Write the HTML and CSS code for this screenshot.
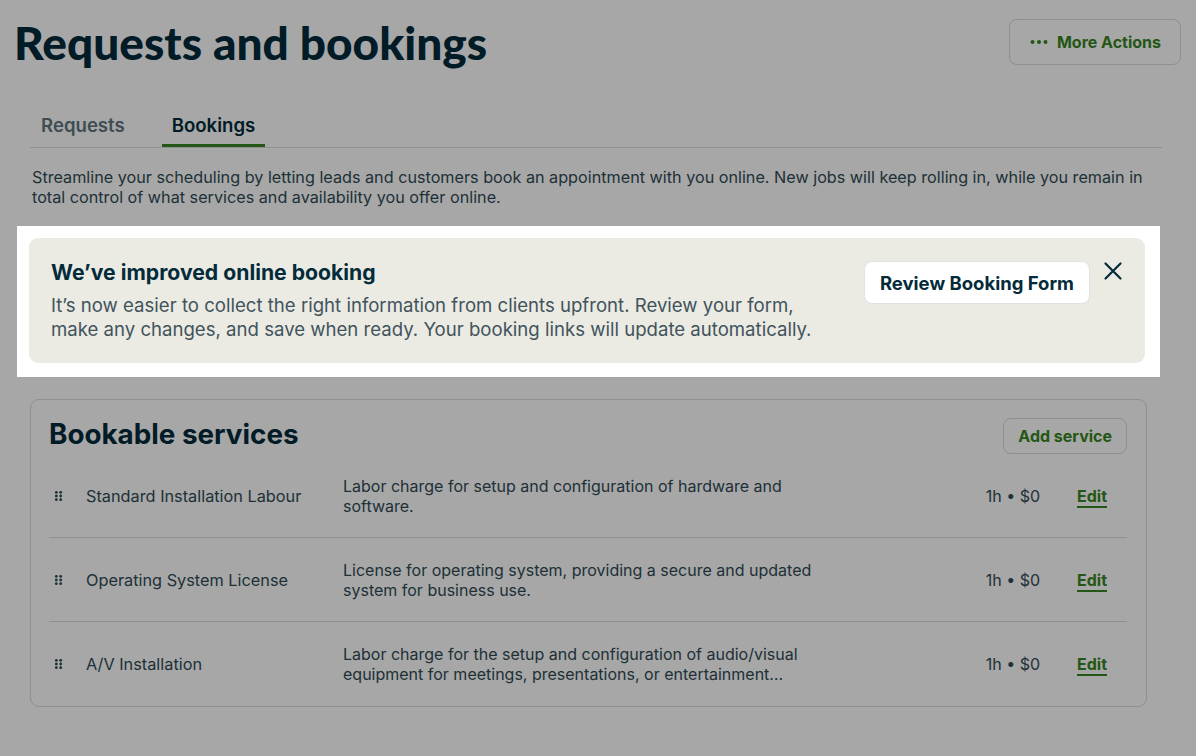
FILE: index.html
```html
<!DOCTYPE html>
<html lang="en">
<head>
<meta charset="utf-8">
<title>Requests and bookings</title>
<link rel="stylesheet" href="styles.css">
</head>
<body>
<div class="page">
  <header class="top">
    <h1 class="title">Requests and bookings</h1>
    <button class="btn btn-outline more">
      <svg class="dots" width="18" height="6" viewBox="0 0 18 6" aria-hidden="true"><circle cx="2.5" cy="3" r="2" /><circle cx="9" cy="3" r="2" /><circle cx="15.5" cy="3" r="2" /></svg>
      <span>More Actions</span>
    </button>
  </header>

  <main class="content">
    <nav class="tabs">
      <a class="tab">Requests</a>
      <a class="tab active">Bookings</a>
    </nav>

    <p class="intro">Streamline your scheduling by letting leads and customers book an appointment with you online. New jobs will keep rolling in, while you remain in total control of what services and availability you offer online.</p>

    <div class="spotlight">
      <div class="banner">
        <div class="banner-text">
          <h2 class="banner-title">We’ve improved online booking</h2>
          <p class="banner-body">It’s now easier to collect the right information from clients upfront. Review your form, make any changes, and save when ready. Your booking links will update automatically.</p>
        </div>
        <div class="banner-actions">
          <button class="btn btn-white">Review Booking Form</button>
          <button class="close" aria-label="Dismiss">
            <svg width="24" height="24" viewBox="0 0 24 24" aria-hidden="true"><path d="M4.5 4.5 L19.5 19.5 M19.5 4.5 L4.5 19.5" /></svg>
          </button>
        </div>
      </div>
    </div>

    <section class="card">
      <div class="card-head">
        <h2 class="card-title">Bookable services</h2>
        <button class="btn btn-outline add">Add service</button>
      </div>
      <ul class="services">
        <li class="service">
          <svg class="handle" width="20" height="20" viewBox="0 0 20 20" aria-hidden="true"><circle cx="7.3" cy="6.3" r="1.4"/><circle cx="11.7" cy="6.3" r="1.4"/><circle cx="7.3" cy="10" r="1.4"/><circle cx="11.7" cy="10" r="1.4"/><circle cx="7.3" cy="13.7" r="1.4"/><circle cx="11.7" cy="13.7" r="1.4"/></svg>
          <span class="name">Standard Installation Labour</span>
          <span class="desc">Labor charge for setup and configuration of hardware and software.</span>
          <span class="meta">1h • $0</span>
          <a class="edit">Edit</a>
        </li>
        <li class="service">
          <svg class="handle" width="20" height="20" viewBox="0 0 20 20" aria-hidden="true"><circle cx="7.3" cy="6.3" r="1.4"/><circle cx="11.7" cy="6.3" r="1.4"/><circle cx="7.3" cy="10" r="1.4"/><circle cx="11.7" cy="10" r="1.4"/><circle cx="7.3" cy="13.7" r="1.4"/><circle cx="11.7" cy="13.7" r="1.4"/></svg>
          <span class="name">Operating System License</span>
          <span class="desc">License for operating system, providing a secure and updated system for business use.</span>
          <span class="meta">1h • $0</span>
          <a class="edit">Edit</a>
        </li>
        <li class="service">
          <svg class="handle" width="20" height="20" viewBox="0 0 20 20" aria-hidden="true"><circle cx="7.3" cy="6.3" r="1.4"/><circle cx="11.7" cy="6.3" r="1.4"/><circle cx="7.3" cy="10" r="1.4"/><circle cx="11.7" cy="10" r="1.4"/><circle cx="7.3" cy="13.7" r="1.4"/><circle cx="11.7" cy="13.7" r="1.4"/></svg>
          <span class="name">A/V Installation</span>
          <span class="desc">Labor charge for the setup and configuration of audio/visual equipment for meetings, presentations, or entertainment…</span>
          <span class="meta">1h • $0</span>
          <a class="edit">Edit</a>
        </li>
      </ul>
    </section>
  </main>
</div>
</body>
</html>
```

FILE: styles.css
```css
* { box-sizing: border-box; }

html, body {
  margin: 0;
  padding: 0;
  background: #ffffff;
  overflow: hidden;
}

body {
  font-family: Inter, "Noto Sans", sans-serif;
  color: #032b3a;
  width: 1196px;
  height: 756px;
}

.page {
  width: 1196px;
  height: 756px;
}

/* header */
.top {
  display: flex;
  align-items: center;
  justify-content: space-between;
  padding: 19px 15px 0 14px;
}

.title {
  margin: 0;
  font-family: Lato, "Noto Sans", sans-serif;
  font-weight: 900;
  font-size: 46px;
  line-height: 46px;
  letter-spacing: 0;
  color: #032b3a;
  position: relative;
  top: 1px;
}

.btn {
  font-family: Inter, "Noto Sans", sans-serif;
  font-weight: 700;
  cursor: pointer;
  border-radius: 8px;
  display: inline-flex;
  align-items: center;
  justify-content: center;
}

.btn-outline {
  background: #ffffff;
  border: 1px solid #d6dcde;
  color: #388523;
}

.more {
  height: 46px;
  padding: 0 19px 0 20px;
  gap: 9px;
  font-size: 16px;
}

.dots { fill: #388523; }

/* content */
.content {
  padding: 0 34px 0 30px;
}

.tabs {
  display: flex;
  gap: 27px;
  margin-top: 35px;
  border-bottom: 1px solid #d9dee0;
  padding-left: 1px;
}

.tab {
  font-size: 18.6px;
  line-height: 22px;
  font-weight: 600;
  color: #5f7680;
  padding: 14px 10px 8px;
  border-bottom: 3px solid transparent;
}

.tab.active {
  color: #032b3a;
  border-bottom-color: #388523;
}

.intro {
  margin: 19px 0 0;
  padding-left: 2px;
  font-size: 16.2px;
  line-height: 20px;
  color: #304b55;
}

/* spotlight banner */
.spotlight {
  position: relative;
  z-index: 10;
  margin: 19px 2px 0 -13px;
  padding: 12px 15px 14px 12px;
  background: #ffffff;
  box-shadow: 0 0 0 3000px rgba(0, 0, 0, 0.345);
}

.banner {
  display: flex;
  align-items: flex-start;
  background: #ebeae3;
  border-radius: 9px;
  padding: 21px 20px 22px 22px;
}

.banner-text {
  flex: 1;
  max-width: 772px;
}

.banner-title {
  margin: 0;
  font-size: 21.2px;
  line-height: 26px;
  font-weight: 700;
  color: #032b3a;
}

.banner-body {
  margin: 8px 0 0;
  font-size: 18.6px;
  line-height: 24px;
  color: #41545c;
}

.banner-actions {
  margin-left: auto;
  display: flex;
  align-items: flex-start;
  gap: 11px;
}

.btn-white {
  margin-top: 2px;
  background: #ffffff;
  border: 1px solid #dfe3e3;
  color: #032b3a;
  font-size: 18.5px;
  height: 43px;
  padding: 0 15px;
}

.close {
  border: 0;
  background: transparent;
  padding: 0;
  width: 24px;
  height: 24px;
  cursor: pointer;
}

.close svg path {
  fill: none;
  stroke: #032b3a;
  stroke-width: 2.2;
  stroke-linecap: round;
}

/* card */
.card {
  margin-top: 22px;
  margin-right: 15px;
  border: 1px solid #d6dcde;
  border-radius: 9px;
  padding: 18px 19px 0 18px;
}

.card-head {
  display: flex;
  align-items: center;
  justify-content: space-between;
}

.card-title {
  margin: -5px 0 0;
  font-size: 27.8px;
  line-height: 32px;
  font-weight: 700;
  color: #032b3a;
}

.add {
  height: 36px;
  padding: 0 14px;
  font-size: 16px;
}

.services {
  list-style: none;
  margin: 0;
  padding: 0;
}

.service {
  display: grid;
  grid-template-columns: 20px 240px 490px 1fr 70px;
  column-gap: 17px;
  align-items: center;
  height: 84px;
  border-bottom: 1px solid #d9dee0;
}

.service:last-child { border-bottom: 0; }

.handle { fill: #304b55; }

.name {
  font-size: 16.3px;
  line-height: 20px;
  color: #304b55;
}

.desc {
  font-size: 16px;
  line-height: 20px;
  color: #304b55;
}

.meta {
  justify-self: end;
  font-size: 16px;
  color: #304b55;
}

.edit {
  justify-self: center;
  font-size: 16px;
  font-weight: 700;
  color: #388523;
  text-decoration: underline;
  text-decoration-thickness: 2px;
  text-underline-offset: 4px;
}
```
